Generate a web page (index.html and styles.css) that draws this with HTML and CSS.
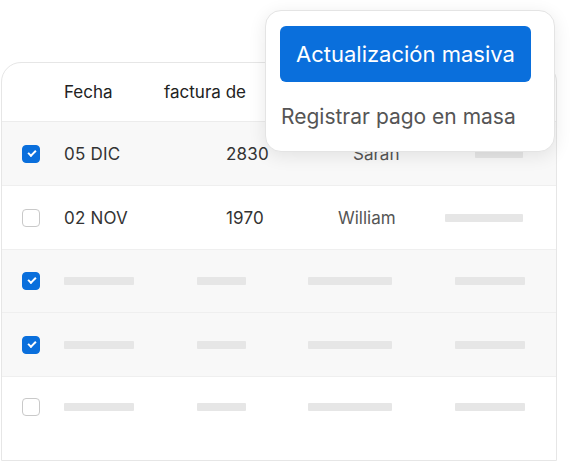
FILE: index.html
```html
<!DOCTYPE html>
<html lang="es">
<head>
  <meta charset="UTF-8">
  <meta name="viewport" content="width=device-width, initial-scale=1.0">
  <title>Facturas</title>
  <link rel="stylesheet" href="styles.css">
</head>
<body>
  <div class="table-card">
    <div class="head-row">
      <span class="head-date">Fecha</span>
      <span>factura de</span>
    </div>
    <div class="row gray">
      <span class="check on"></span>
      <span class="cell date">05 DIC</span>
      <span class="cell amount">2830</span>
      <span class="cell name sarah">Sarah</span>
      <span class="cell last"><i class="bar w48"></i></span>
    </div>
    <div class="row">
      <span class="check"></span>
      <span class="cell date">02 NOV</span>
      <span class="cell amount">1970</span>
      <span class="cell name">William</span>
      <span class="cell last"><i class="bar w78"></i></span>
    </div>
    <div class="row gray short">
      <span class="check on"></span>
      <span class="cell date"><i class="bar w70"></i></span>
      <span class="cell amount"><i class="bar w49"></i></span>
      <span class="cell name"><i class="bar w84"></i></span>
      <span class="cell last"><i class="bar w70 end"></i></span>
    </div>
    <div class="row gray">
      <span class="check on"></span>
      <span class="cell date"><i class="bar w70"></i></span>
      <span class="cell amount"><i class="bar w49"></i></span>
      <span class="cell name"><i class="bar w84"></i></span>
      <span class="cell last"><i class="bar w70 end"></i></span>
    </div>
    <div class="row last-row">
      <span class="check"></span>
      <span class="cell date"><i class="bar w70"></i></span>
      <span class="cell amount"><i class="bar w49"></i></span>
      <span class="cell name"><i class="bar w84"></i></span>
      <span class="cell last"><i class="bar w70 end"></i></span>
    </div>
  </div>

  <div class="bulk-menu">
    <button class="bulk-btn">Actualización masiva</button>
    <div class="bulk-item">Registrar pago en masa</div>
  </div>
</body>
</html>
```

FILE: styles.css
```css
body {
  margin: 0;
  font-family: Inter, "Noto Sans", sans-serif;
  background: #fff;
  color: #333;
}
.table-card {
  margin: 62px 0 0 1px;
  width: 556px;
  height: 399px;
  box-sizing: border-box;
  border: 1px solid #e6e6e6;
  border-radius: 20px 20px 0 0;
  display: flex;
  flex-direction: column;
  overflow: hidden;
}
.head-row {
  height: 59px;
  box-sizing: border-box;
  border-bottom: 1px solid #ececec;
  display: flex;
  align-items: center;
  padding-left: 62px;
  font-size: 17px;
  color: #222;
}
.head-date {
  width: 100px;
}
.row {
  height: 64px;
  box-sizing: border-box;
  border-bottom: 1px solid #efefef;
  display: grid;
  grid-template-columns: 62px 133px 112px 130px 1fr;
  align-items: center;
  font-size: 17px;
}
.row.short {
  height: 63px;
}
.row.gray {
  background: #f8f8f8;
}
.row.last-row {
  flex: 1;
  height: auto;
  border-bottom: none;
  align-items: start;
  padding-top: 21px;
}
.check {
  width: 18px;
  height: 18px;
  box-sizing: border-box;
  margin-left: 20px;
  border: 1.5px solid #c9c9c9;
  border-radius: 4px;
  background: #fff;
  position: relative;
}
.check.on {
  background: #0a6fdc;
  border-color: #0a6fdc;
}
.check.on::after {
  content: "";
  position: absolute;
  left: 4.5px;
  top: 4px;
  width: 6px;
  height: 3px;
  border-left: 2px solid #fff;
  border-bottom: 2px solid #fff;
  transform: rotate(-45deg);
}
.cell {
  display: flex;
  align-items: center;
}
.date {
  color: #333;
  letter-spacing: 0.2px;
}
.amount {
  padding-left: 29px;
  color: #333;
  letter-spacing: 0.2px;
}
.row .amount .bar {
  margin-left: -29px;
}
.name {
  padding-left: 29px;
  color: #555;
}
.name.sarah {
  padding-left: 44px;
}
.row .name .bar {
  margin-left: -30px;
}
.last {
  justify-content: flex-end;
  padding-right: 33px;
}
.last .bar.end {
  margin-right: -2px;
}
.last-row .cell {
  height: 18px;
}
.bar {
  display: block;
  height: 8px;
  border-radius: 1px;
  background: #e6e6e6;
}
.w48 { width: 48px; }
.w49 { width: 49px; }
.w70 { width: 70px; }
.w78 { width: 78px; }
.w84 { width: 84px; }

.bulk-menu {
  position: absolute;
  left: 265px;
  top: 10px;
  width: 290px;
  height: 142px;
  box-sizing: border-box;
  background: #fff;
  border: 1px solid #e4e4e4;
  border-radius: 16px;
  box-shadow: 0 4px 18px rgba(0, 0, 0, 0.09);
  padding: 15px 0 0 14px;
}
.bulk-btn {
  display: block;
  height: 56px;
  padding: 0 16px;
  border: none;
  border-radius: 6px;
  background: #0a6fdc;
  color: #fff;
  font-family: inherit;
  font-size: 22px;
}
.bulk-item {
  margin-top: 22px;
  padding-left: 1px;
  font-size: 21px;
  color: #555;
}
```
